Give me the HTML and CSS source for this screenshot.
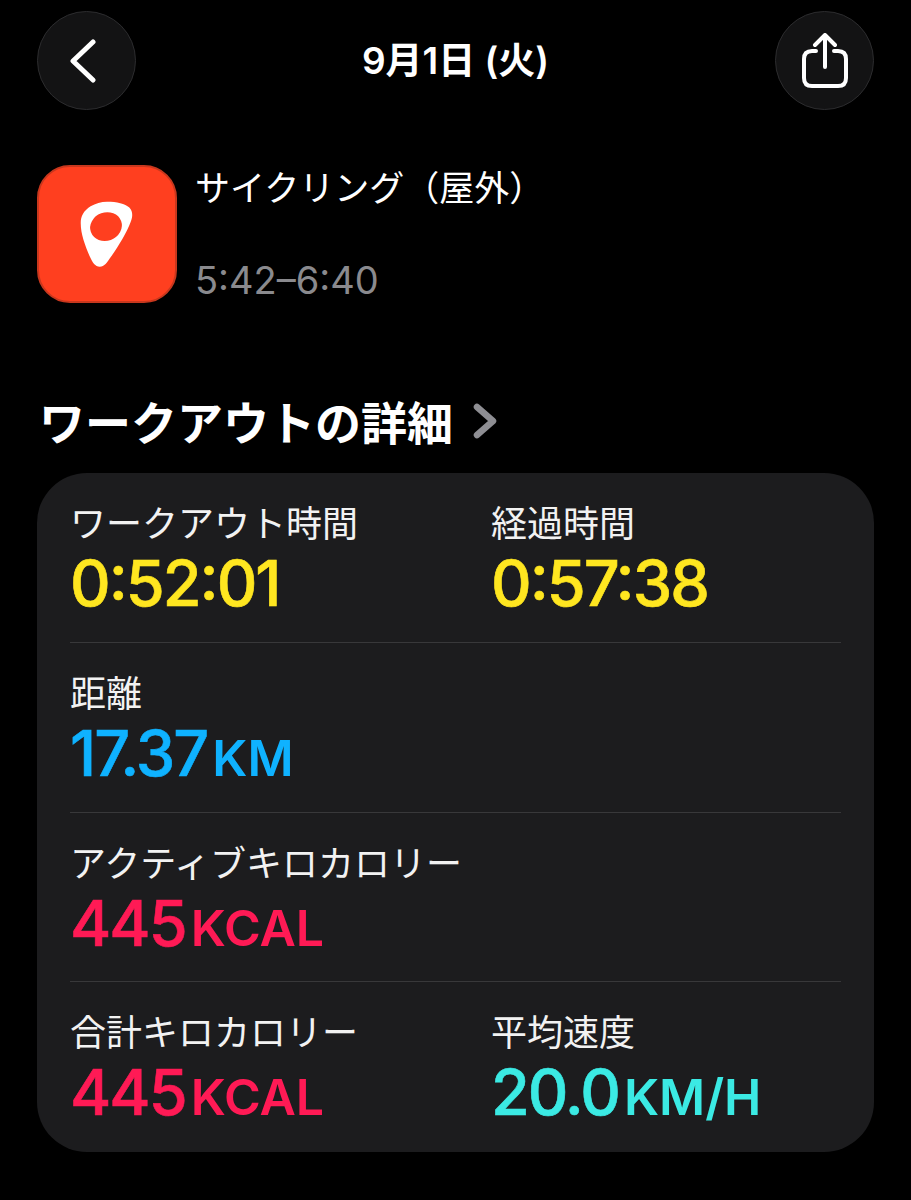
FILE: index.html
```html
<!DOCTYPE html>
<html lang="ja">
<head>
<meta charset="utf-8">
<title>9月1日 (火)</title>
<link rel="stylesheet" href="styles.css">
</head>
<body>
<main class="screen">
  <header class="topbar">
    <button class="round" aria-label="戻る">
      <svg class="back-icon" width="30" height="44" viewBox="0 0 30 44"><path d="M24 3 L4 22 L24 41" fill="none" stroke="#fff" stroke-width="5" stroke-linecap="round" stroke-linejoin="round"/></svg>
    </button>
    <h1 class="date">9月1日 (火)</h1>
    <button class="round" aria-label="共有">
      <svg width="46" height="56" viewBox="0 0 46 56"><path d="M14 18 H10 Q2 18 2 26 V45 Q2 53 10 53 H36 Q44 53 44 45 V26 Q44 18 36 18 H32" fill="none" stroke="#fff" stroke-width="4" stroke-linecap="round"/><path d="M23 34 V3 M13 12 L23 2 L33 12" fill="none" stroke="#fff" stroke-width="4" stroke-linecap="round" stroke-linejoin="round"/></svg>
    </button>
  </header>

  <section class="activity">
    <div class="app-icon">
      <svg width="54" height="67" viewBox="-2 -2 164 204"><path fill="#fff" d="M80 0 C110 0 135 6 148 18 C160 30 158 48 152 62 C140 95 115 135 92 168 C80 186 72 198 58 198 C44 198 36 186 28 168 C14 135 0 100 0 65 C0 45 8 28 30 14 C45 5 62 0 80 0Z"/><ellipse cx="77" cy="76" rx="49" ry="43" transform="rotate(-20 77 76)" fill="#ff3f1f"/></svg>
    </div>
    <div class="activity-text">
      <p class="activity-name">サイクリング（屋外）</p>
      <p class="activity-time">5:42–6:40</p>
    </div>
  </section>

  <h2 class="section-title">ワークアウトの詳細
    <svg class="chev" width="24" height="36" viewBox="0 0 24 36"><path d="M4 4 L20 18 L4 32" fill="none" stroke="#8e8e93" stroke-width="6.5" stroke-linecap="round" stroke-linejoin="round"/></svg>
  </h2>

  <section class="card">
    <div class="row">
      <div class="metric"><div class="label">ワークアウト時間</div><div class="value yellow">0:52:01</div></div>
      <div class="metric"><div class="label">経過時間</div><div class="value yellow">0:57:38</div></div>
    </div>
    <div class="row">
      <div class="metric"><div class="label">距離</div><div class="value blue">17.37<span class="unit">KM</span></div></div>
    </div>
    <div class="row">
      <div class="metric"><div class="label">アクティブキロカロリー</div><div class="value pink">445<span class="unit">KCAL</span></div></div>
    </div>
    <div class="row">
      <div class="metric"><div class="label">合計キロカロリー</div><div class="value pink">445<span class="unit">KCAL</span></div></div>
      <div class="metric"><div class="label">平均速度</div><div class="value cyan">20.0<span class="unit">KM/H</span></div></div>
    </div>
  </section>
</main>
</body>
</html>
```
FILE: styles.css
```css
* { box-sizing: border-box; }
html, body { margin: 0; background: #000; }
body {
  font-family: Inter, "Noto Sans CJK JP", sans-serif;
  color: #fff;
}
.screen {
  width: 911px;
  height: 1200px;
  padding: 11px 37px 0 37px;
  overflow: hidden;
}
.topbar {
  display: flex;
  align-items: center;
  justify-content: space-between;
  height: 99px;
}
.round {
  width: 99px;
  height: 99px;
  padding: 0;
  border-radius: 50%;
  border: 1.5px solid #2c2c2e;
  background: #131314;
  display: flex;
  align-items: center;
  justify-content: center;
}
.back-icon { margin-right: 5px; }
.date {
  margin: 0;
  font-size: 37px;
  font-weight: 600;
  line-height: 1;
}
.activity {
  display: flex;
  gap: 18px;
  margin-top: 55px;
}
.app-icon {
  width: 140px;
  height: 138px;
  border-radius: 33px;
  background: #ff3f1f;
  border: 2.5px solid #c8371d;
  display: flex;
  align-items: center;
  justify-content: center;
}
.activity-text {
  display: flex;
  flex-direction: column;
  justify-content: space-between;
  height: 138px;
}
.activity-name, .activity-time { margin: 0; line-height: 46px; }
.activity-name { font-size: 35px; }
.activity-time { font-size: 38px; color: #8a8a8e; font-feature-settings: "case"; }
.section-title {
  display: flex;
  align-items: center;
  gap: 20px;
  margin: 92px 0 0 2px;
  font-size: 46px;
  font-weight: 700;
  line-height: 56px;
  height: 56px;
}
.chev { margin-top: -4px; }
.card {
  margin-top: 22px;
  width: 837px;
  height: 679px;
  background: #1c1c1e;
  border-radius: 50px;
  padding: 0 33px;
}
.row {
  display: flex;
  height: 170px;
  padding-top: 29px;
  border-bottom: 1px solid #38383a;
}
.row:nth-child(3) { height: 169px; }
.row:last-child { border-bottom: 0; }
.metric { flex: none; width: 421px; }
.label { font-size: 36px; line-height: 44px; color: #f2f2f2; white-space: nowrap; }
.value {
  margin-top: 3px;
  font-size: 63px;
  font-weight: 500;
  line-height: 68px;
  letter-spacing: -2px;
  font-feature-settings: "case";
  -webkit-text-stroke: 0.6px currentColor;
}
.unit { font-size: 50px; font-weight: 600; letter-spacing: 0; margin-left: 5px; -webkit-text-stroke: 0; }
.yellow { color: #ffe620; }
.blue { color: #0fb2ff; }
.pink { color: #ff1a55; }
.cyan { color: #3beae4; }
```
